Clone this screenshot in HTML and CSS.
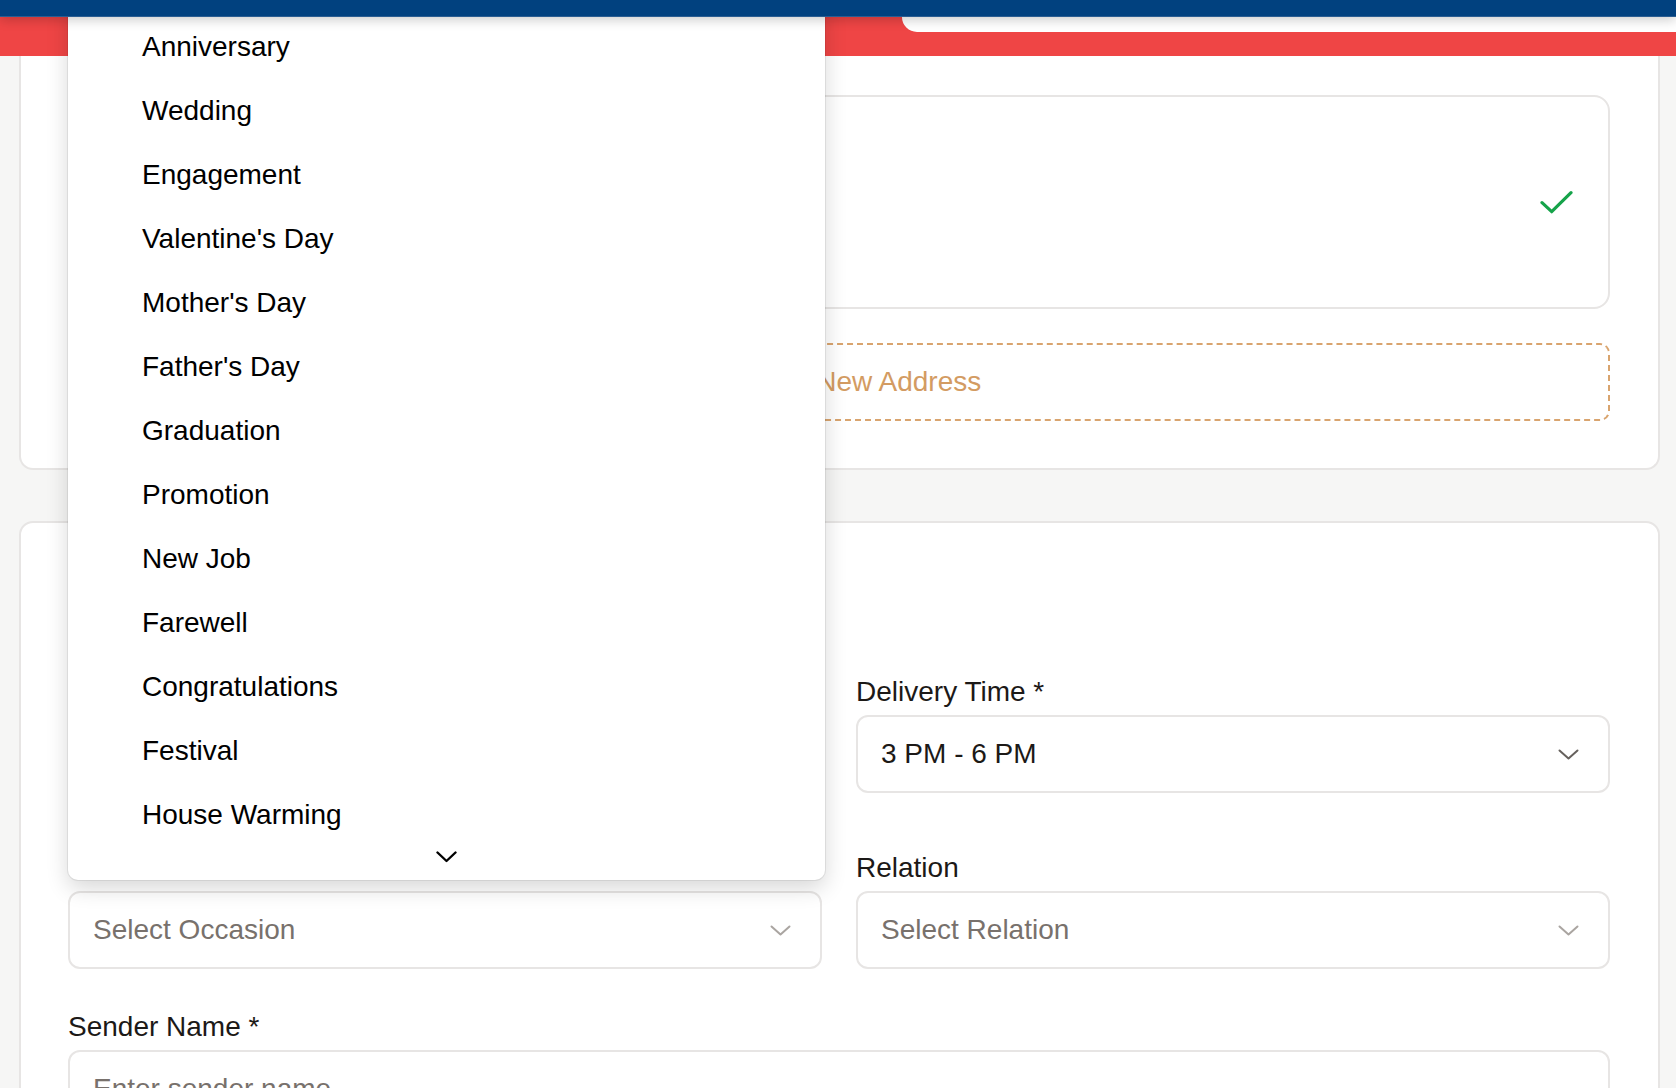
FILE: index.html
```html
<!DOCTYPE html>
<html lang="en">
<head>
<meta charset="utf-8">
<title>Checkout - Delivery</title>
<link rel="stylesheet" href="styles.css">
</head>
<body>
  <header class="topbar"></header>
  <div class="banner"><div class="banner-tab"></div></div>

  <main class="page">
    <section class="card card-address">
      <div class="address-option">
        <div class="address-text">
          <div class="address-name">Priya Sharma</div>
          <div>+91 98765 43210</div>
          <div>12, MG Road, Indiranagar</div>
          <div>Bengaluru, Karnataka 560038</div>
        </div>
        <svg class="check" width="34" height="25" viewBox="0 0 34 25" aria-hidden="true">
          <path d="M2 12.7 L11.7 21.7 L31 2.7" fill="none" stroke="#16a34a" stroke-width="3.2" stroke-linecap="round" stroke-linejoin="round"/>
        </svg>
      </div>
      <div class="add-address">
        <svg width="40" height="40" viewBox="0 0 40 40" aria-hidden="true">
          <path d="M20 8 V32 M8 20 H32" fill="none" stroke="#d39b62" stroke-width="3" stroke-linecap="round"/>
        </svg>
        <span>Add New Address</span>
      </div>
    </section>

    <section class="card card-delivery">
      <h2 class="card-title">Delivery Details</h2>
      <div class="field-grid">
        <div class="field">
          <label>Delivery Date *</label>
          <div class="control">Select date</div>
        </div>
        <div class="field">
          <label>Delivery Time *</label>
          <div class="control">
            <span>3 PM - 6 PM</span>
            <svg class="chev chev-dark" width="21" height="11" viewBox="0 0 21 11" aria-hidden="true"><path d="M1.5 1.5 L10.5 9.5 L19.5 1.5" fill="none" stroke="currentColor" stroke-width="2" stroke-linecap="round" stroke-linejoin="round"/></svg>
          </div>
        </div>
        <div class="field">
          <label>Occasion</label>
          <div class="control placeholder">
            <span>Select Occasion</span>
            <svg class="chev" width="21" height="11" viewBox="0 0 21 11" aria-hidden="true"><path d="M1.5 1.5 L10.5 9.5 L19.5 1.5" fill="none" stroke="currentColor" stroke-width="2" stroke-linecap="round" stroke-linejoin="round"/></svg>
          </div>
        </div>
        <div class="field">
          <label>Relation</label>
          <div class="control placeholder">
            <span>Select Relation</span>
            <svg class="chev" width="21" height="11" viewBox="0 0 21 11" aria-hidden="true"><path d="M1.5 1.5 L10.5 9.5 L19.5 1.5" fill="none" stroke="currentColor" stroke-width="2" stroke-linecap="round" stroke-linejoin="round"/></svg>
          </div>
        </div>
      </div>
      <div class="field sender">
        <label>Sender Name *</label>
        <div class="control placeholder"><span>Enter sender name</span></div>
      </div>
    </section>
  </main>

  <div class="menu" role="listbox">
    <ul class="menu-list">
      <li>Anniversary</li>
      <li>Wedding</li>
      <li>Engagement</li>
      <li>Valentine's Day</li>
      <li>Mother's Day</li>
      <li>Father's Day</li>
      <li>Graduation</li>
      <li>Promotion</li>
      <li>New Job</li>
      <li>Farewell</li>
      <li>Congratulations</li>
      <li>Festival</li>
      <li>House Warming</li>
    </ul>
    <div class="menu-more">
      <svg width="21" height="12" viewBox="0 0 21 12" aria-hidden="true"><path d="M1.5 1.5 L10.5 10 L19.5 1.5" fill="none" stroke="#000" stroke-width="2.4" stroke-linecap="round" stroke-linejoin="round"/></svg>
    </div>
  </div>
</body>
</html>
```

FILE: styles.css
```css
html, body {
  margin: 0;
  padding: 0;
  height: 100%;
  overflow: hidden;
}

body {
  position: relative;
  width: 1676px;
  background: #f6f6f5;
  color: #1c1917;
  font-family: "Liberation Sans", Arial, Helvetica, sans-serif;
}

/* top header */
.topbar {
  position: relative;
  z-index: 30;
  height: 16px;
  background: #01417f;
  border-bottom: 1px solid #2a5d92;
  box-shadow: 0 3px 12px rgba(0, 0, 0, 0.2);
}

.banner {
  position: relative;
  z-index: 5;
  height: 39px;
  background: #ef4545;
  display: flex;
  justify-content: flex-end;
  align-items: flex-start;
}

.banner-tab {
  width: 774px;
  height: 15px;
  background: #ffffff;
  border-bottom-left-radius: 15px;
}

/* page + cards */
.page {
  padding: 0 16px 0 19px;
}

.card {
  background: #ffffff;
  border: 2px solid #e7e5e4;
  border-radius: 14px;
  padding: 47px 48px 47px 47px;
}

.card-address {
  border-top: none;
  border-radius: 0 0 14px 14px;
  padding-top: 39px;
}

.address-option {
  box-sizing: border-box;
  height: 214px;
  border: 2px solid #e7e5e4;
  border-radius: 16px;
  padding: 0 36px 0 35px;
  display: flex;
  align-items: center;
  justify-content: space-between;
}

.address-text {
  font-size: 26px;
  line-height: 35px;
  color: #44403c;
}

.address-name {
  font-weight: 700;
  color: #1c1917;
}

.check {
  display: block;
  margin-right: -2px;
}

.add-address {
  box-sizing: border-box;
  height: 78px;
  margin-top: 34px;
  border: 2px dashed #d9a46e;
  border-radius: 10px;
  display: flex;
  align-items: center;
  justify-content: center;
  gap: 22px;
  color: #d39b62;
  font-size: 28px;
}

.card-delivery {
  margin-top: 51px;
}

.card-title {
  margin: 0 0 48px;
  font-size: 35px;
  line-height: 56px;
  font-weight: 700;
}

.field-grid {
  display: grid;
  grid-template-columns: 1fr 1fr;
  column-gap: 34px;
  row-gap: 57px;
}

.field label {
  display: block;
  font-size: 28px;
  line-height: 35px;
  margin-bottom: 6px;
  color: #1c1917;
}

.control {
  box-sizing: border-box;
  height: 78px;
  border: 2px solid #e7e5e4;
  border-radius: 12px;
  padding: 0 29px 0 23px;
  display: flex;
  align-items: center;
  justify-content: space-between;
  font-size: 28px;
  color: #1c1917;
  background: #fff;
}

.control.placeholder {
  color: #78716c;
}

.chev {
  display: block;
  color: #aaa5a1;
}

.chev-dark {
  color: #66615d;
}

.sender {
  margin-top: 40px;
}

/* native-style dropdown menu */
.menu {
  position: absolute;
  z-index: 20;
  left: 68px;
  top: 0;
  width: 757px;
  height: 880px;
  box-sizing: border-box;
  padding-top: 15px;
  background: #ffffff;
  border-radius: 0 0 10px 10px;
  box-shadow: 0 0 0 1px rgba(0, 0, 0, 0.07), 0 8px 22px rgba(0, 0, 0, 0.16);
}

.menu-list {
  list-style: none;
  margin: 0;
  padding: 0;
}

.menu-list li {
  height: 64px;
  line-height: 64px;
  padding-left: 74px;
  font-size: 28px;
  color: #000;
  white-space: nowrap;
}

.menu-more {
  box-sizing: border-box;
  height: 33px;
  padding-top: 4px;
  display: flex;
  justify-content: center;
  align-items: flex-start;
}

.menu-more svg {
  display: block;
}
```
